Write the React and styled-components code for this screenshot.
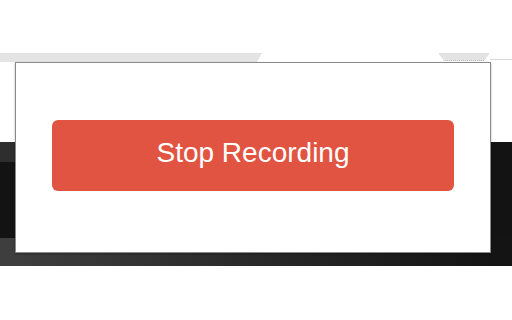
import React from "react";
import styled, {createGlobalStyle} from "styled-components";

const Global = createGlobalStyle`
  html, body {
    margin: 0;
    padding: 0;
    background: #fff;
  }
`;

export default function App() {
    return (
        <Page>
            <Global />
            <TopSpace />
            <TabStrip>
                <LeftTab />
                <RightTab />
                <RightLine />
            </TabStrip>
            <Content>
                <WhiteArea />
                <DarkBand>
                    <Strip height={20} from="#2e2e2e" to="#131313" />
                    <Strip height={76} from="#131313" to="#131313" />
                    <Strip height={28} from="#3e3e3e" to="#141414" />
                </DarkBand>
                <Popup>
                    <StopButton>Stop Recording</StopButton>
                </Popup>
            </Content>
        </Page>
    );
}

const Page = styled.div`
  width: 512px;
  height: 320px;
  overflow: hidden;
  background: #fff;
  font-family: "Liberation Sans", Arial, sans-serif;
`;

const TopSpace = styled.div`
  height: 53px;
`;

const TabStrip = styled.div`
  height: 9px;
  display: flex;
  align-items: flex-start;
`;

const LeftTab = styled.div`
  width: 262px;
  height: 9px;
  background: #e4e4e4;
  clip-path: polygon(0 0, 262px 0, 257px 100%, 0 100%);
`;

const RightTab = styled.div`
  margin-left: 176px;
  width: 52px;
  height: 8px;
  background: #e3e3e3;
  border-bottom: 1px dotted #bdbdbd;
  box-sizing: border-box;
  clip-path: polygon(0 0, 100% 0, 88% 100%, 12% 100%);
`;

const RightLine = styled.div`
  flex: 1;
  height: 1px;
  margin-top: 6px;
  background: #d8d8d8;
`;

const Content = styled.div`
  position: relative;
`;

const WhiteArea = styled.div`
  height: 80px;
  background: #fff;
`;

const DarkBand = styled.div`
  display: flex;
  flex-direction: column;
  background: #131313;
`;

const Strip = styled.div`
  height: ${p => p.height}px;
  background: linear-gradient(90deg, ${p => p.from} 0, ${p => p.from} 15px, ${p => p.to} 490px);
`;

const Popup = styled.div`
  position: absolute;
  top: 0;
  left: 15px;
  width: 476px;
  height: 191px;
  box-sizing: border-box;
  background: #fff;
  border: 1px solid #8a8a8a;
  box-shadow: 0 1px 2px rgba(0, 0, 0, 0.3);
  display: flex;
  align-items: flex-start;
  padding: 57px 0 0 36px;
`;

const StopButton = styled.button`
  width: 402px;
  height: 71px;
  border: none;
  border-radius: 6px;
  background: #e15442;
  color: #fff;
  font-family: "Liberation Sans", Arial, sans-serif;
  font-size: 28px;
  padding: 0 0 5px;
  cursor: pointer;
`;
